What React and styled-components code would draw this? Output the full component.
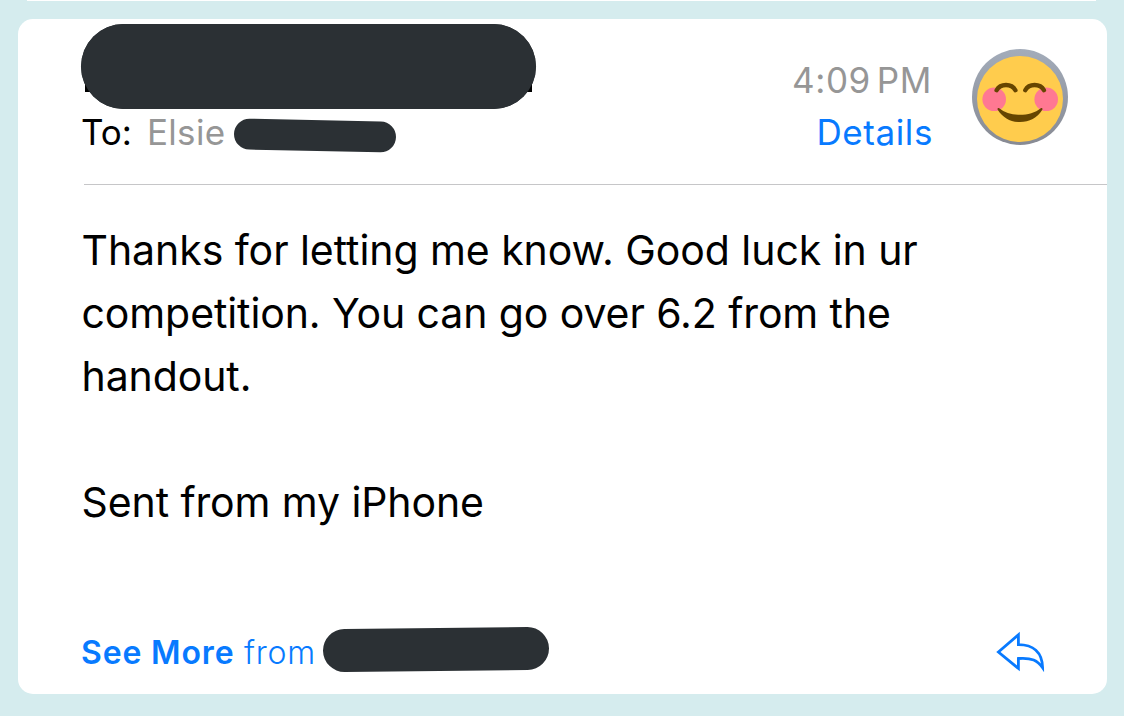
import React from 'react';
import styled, { createGlobalStyle } from 'styled-components';

const App = () => {
    return (
        <>
            <GlobalStyle />
            <Page>
                <PreviousCard />
                <Card>
                    <Header>
                        <People>
                            <SenderMask />
                            <Recipient>
                                <ToLabel>To:</ToLabel>
                                <RecipientName>Elsie</RecipientName>
                                <RecipientMask />
                            </Recipient>
                        </People>
                        <Meta>
                            <Time>4:09 PM</Time>
                            <DetailsLink>Details</DetailsLink>
                        </Meta>
                        <Avatar />
                    </Header>
                    <Body>
                        <Line $tracking="-0.06px">Thanks for letting me know. Good luck in ur</Line>
                        <Line>competition. You can go over 6.2 from the</Line>
                        <Line>handout.</Line>
                        <Line />
                        <Line>Sent from my iPhone</Line>
                    </Body>
                    <Footer>
                        <SeeMore>See More</SeeMore>
                        <From>from</From>
                        <FromMask />
                        <ReplyIcon />
                    </Footer>
                </Card>
            </Page>
        </>
    );
};

const Avatar = () => (
    <AvatarSvg viewBox="0 0 96 96">
        <defs>
            <linearGradient id="ring" x1="0" y1="0" x2="0" y2="1">
                <stop offset="0" stopColor="#a3acba" />
                <stop offset="1" stopColor="#878a93" />
            </linearGradient>
        </defs>
        <circle cx="48" cy="48" r="48" fill="url(#ring)" />
        <circle cx="48" cy="50" r="43" fill="#ffcc4d" />
        <circle cx="22.2" cy="50.3" r="11.8" fill="#ff7892" />
        <circle cx="74.2" cy="50.3" r="11.8" fill="#ff7892" />
        <g fill="none" stroke="#664500" strokeWidth="4.4" strokeLinecap="round">
            <path d="M24.6 41.2C28.5 34.2 39.5 34.2 43.4 41.2" />
            <path d="M53.2 41.2C57.1 34.2 68.1 34.2 72 41.2" />
        </g>
        <path
            d="M27.2 59.2C38 68 58 68 68.8 59.2C70 58.5 71 59.5 70.3 60.7C65 69 57.5 73 48 73C38.5 73 31 69 25.7 60.7C25 59.5 26 58.5 27.2 59.2Z"
            fill="#664500"
        />
    </AvatarSvg>
);

const ReplyIcon = () => (
    <ReplySvg viewBox="0 0 50 42">
        <path d="M2.4 21L22.4 3.8V13.6C37 13.6 46.3 21 46.6 36.8C41.5 29.5 36 26.5 22.4 27.5V37.4Z" />
    </ReplySvg>
);

const GlobalStyle = createGlobalStyle`
    body {
        margin: 0;
        background-color: #d5ecee;
        font-family: Inter, "Liberation Sans", sans-serif;
    }
`;

const Page = styled.div`
    box-sizing: border-box;
    display: flex;
    flex-direction: column;
    width: 1124px;
    height: 716px;
    padding: 0 17px 22px 18px;
    overflow: hidden;
`;

const PreviousCard = styled.div`
    height: 1px;
    margin: 0 11px 18px 9px;
    background-color: white;
`;

const Card = styled.div`
    flex: 1;
    display: flex;
    flex-direction: column;
    border-radius: 15px;
    background-color: white;
`;

const Header = styled.div`
    box-sizing: border-box;
    display: flex;
    height: 166px;
    margin-left: 66px;
    padding: 5px 39px 0 0;
    border-bottom: 1px solid #c6c6c8;
`;

const People = styled.div`
    flex: 1;
    margin-left: -3px;
`;

const Mask = styled.div`
    background-color: #2b3034;
`;

const SenderMask = styled(Mask)`
    position: relative;
    width: 455px;
    height: 85px;
    border-radius: 43px;

    &::before {
        content: '';
        position: absolute;
        left: 4px;
        right: 4px;
        bottom: 17px;
        height: 8px;
        background-color: black;
    }

    &::after {
        content: '';
        position: absolute;
        inset: 0;
        border-radius: 43px;
        background-color: #2b3034;
    }
`;

const Recipient = styled.div`
    display: flex;
    align-items: center;
    height: 50px;
    font-size: 35px;
    line-height: 42px;
`;

const ToLabel = styled.span`
    width: 66px;
    margin-top: -5px;
    color: black;
`;

const RecipientName = styled.span`
    width: 87px;
    margin-top: -5px;
    color: #969696;
    letter-spacing: 0.3px;
`;

const RecipientMask = styled(Mask)`
    width: 162px;
    height: 31px;
    margin-top: 3px;
    border-radius: 16px;
    transform: rotate(1.2deg);
`;

const Meta = styled.div`
    display: flex;
    flex-direction: column;
    align-items: flex-end;
    padding-top: 30px;
    margin-right: 39px;
    font-size: 35px;
    line-height: 52px;
`;

const Time = styled.span`
    margin-right: 1px;
    color: #969696;
    letter-spacing: 0.6px;
    word-spacing: -4.5px;
`;

const DetailsLink = styled.a`
    color: #087aff;
    letter-spacing: 0.6px;
`;

const AvatarSvg = styled.svg`
    width: 96px;
    height: 96px;
    margin-top: 25px;
`;

const Body = styled.div`
    flex: 1;
    padding: 34px 64px 0 63.5px;
`;

const Line = styled.div`
    height: 63px;
    color: black;
    font-size: 41px;
    line-height: 63px;
    letter-spacing: ${(props) => props.$tracking || '-0.1px'};
    white-space: nowrap;
`;

const Footer = styled.div`
    display: flex;
    align-items: center;
    height: 84px;
    padding: 0 61px 0 63px;
    color: #087aff;
    font-size: 32px;
`;

const SeeMore = styled.a`
    width: 163px;
    font-weight: 600;
    letter-spacing: 0.85px;
`;

const From = styled.span`
    width: 79px;
    font-weight: 350;
    letter-spacing: 0.8px;
`;

const FromMask = styled(Mask)`
    width: 226px;
    height: 43px;
    margin-top: -6px;
    border-radius: 22px;
    transform: rotate(-0.6deg);
`;

const ReplySvg = styled.svg`
    width: 50px;
    height: 42px;
    margin-left: auto;
    fill: none;
    stroke: #087aff;
    stroke-width: 2.8;
`;

export default App;
